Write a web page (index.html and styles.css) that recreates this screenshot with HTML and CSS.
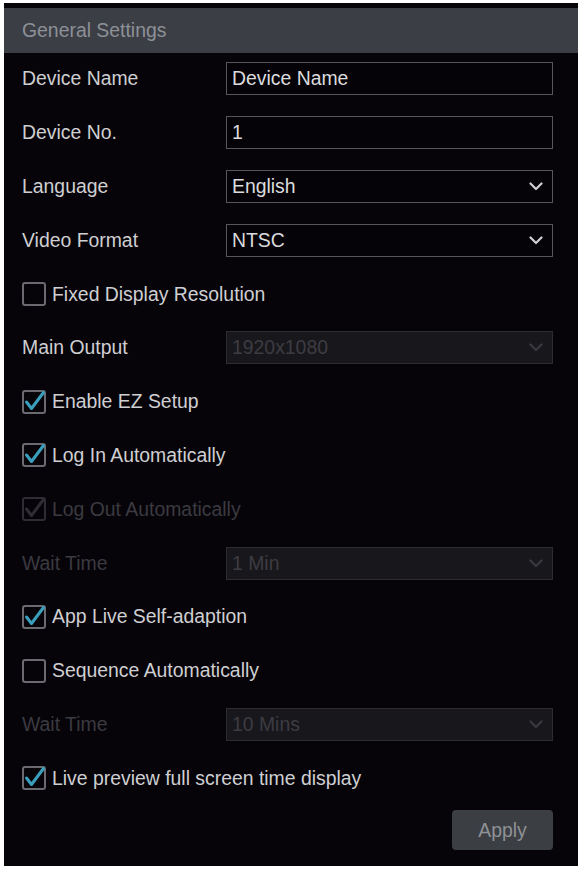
FILE: index.html
```html
<!DOCTYPE html>
<html>
<head>
<meta charset="utf-8">
<link rel="stylesheet" href="styles.css">
</head>
<body>
<div class="panel">
  <div class="header">General Settings</div>
  <div class="form">
    <div class="row"><span class="label">Device Name</span><div class="field">Device Name</div></div>
    <div class="row"><span class="label">Device No.</span><div class="field">1</div></div>
    <div class="row"><span class="label">Language</span><div class="field select">English<svg class="chev" viewBox="0 0 14 9"><polyline points="1.5,1.5 7,7 12.5,1.5"/></svg></div></div>
    <div class="row"><span class="label">Video Format</span><div class="field select">NTSC<svg class="chev" viewBox="0 0 14 9"><polyline points="1.5,1.5 7,7 12.5,1.5"/></svg></div></div>
    <div class="row"><label class="check"><span class="box"></span>Fixed Display Resolution</label></div>
    <div class="row"><span class="label">Main Output</span><div class="field select disabled">1920x1080<svg class="chev" viewBox="0 0 14 9"><polyline points="1.5,1.5 7,7 12.5,1.5"/></svg></div></div>
    <div class="row"><label class="check"><span class="box on"><svg viewBox="0 0 24 24"><polyline points="4.5,12 9.5,18.5 21.5,2.5"/></svg></span>Enable EZ Setup</label></div>
    <div class="row"><label class="check"><span class="box on"><svg viewBox="0 0 24 24"><polyline points="4.5,12 9.5,18.5 21.5,2.5"/></svg></span>Log In Automatically</label></div>
    <div class="row"><label class="check off"><span class="box on"><svg viewBox="0 0 24 24"><polyline points="4.5,12 9.5,18.5 21.5,2.5"/></svg></span>Log Out Automatically</label></div>
    <div class="row"><span class="label off">Wait Time</span><div class="field select disabled">1 Min<svg class="chev" viewBox="0 0 14 9"><polyline points="1.5,1.5 7,7 12.5,1.5"/></svg></div></div>
    <div class="row"><label class="check"><span class="box on"><svg viewBox="0 0 24 24"><polyline points="4.5,12 9.5,18.5 21.5,2.5"/></svg></span>App Live Self-adaption</label></div>
    <div class="row"><label class="check"><span class="box"></span>Sequence Automatically</label></div>
    <div class="row"><span class="label off">Wait Time</span><div class="field select disabled">10 Mins<svg class="chev" viewBox="0 0 14 9"><polyline points="1.5,1.5 7,7 12.5,1.5"/></svg></div></div>
    <div class="row"><label class="check"><span class="box on"><svg viewBox="0 0 24 24"><polyline points="4.5,12 9.5,18.5 21.5,2.5"/></svg></span>Live preview full screen time display</label></div>
    <div class="actions"><button class="apply">Apply</button></div>
  </div>
</div>
</body>
</html>
```
FILE: styles.css
```css
html, body {
  margin: 0;
  padding: 0;
  background: #ffffff;
}

body {
  font-family: "Liberation Sans", Arial, sans-serif;
  font-size: 19.4px;
  color: #cfcfd2;
}

.panel {
  margin: 3px 0 0 4px;
  width: 574px;
  height: 863px;
  box-sizing: border-box;
  padding-top: 5px;
  background: #060409;
}

.header {
  height: 45px;
  background: #3b3e45;
  color: #8d9097;
  line-height: 45px;
  padding-left: 18px;
  font-size: 19.4px;
}

.form {
  padding: 0 25px 0 18px;
  margin-top: -1px;
}

.row {
  height: 53.8px;
  display: grid;
  grid-template-columns: 204px 1fr;
  align-items: center;
}

.label {
  color: #cfcfd2;
}

.label.off {
  color: #3b3a40;
}

.field {
  height: 33px;
  box-sizing: border-box;
  border: 1px solid #56565b;
  background: #050307;
  color: #dcdcdf;
  padding: 0 5px;
  display: flex;
  align-items: center;
  justify-content: space-between;
}

.field.disabled {
  background: #18171c;
  border-color: #2c2b31;
  color: #3d3c42;
}

.chev {
  width: 14px;
  height: 9px;
  margin-right: 4px;
  fill: none;
  stroke: #d0d0d4;
  stroke-width: 2.2;
  stroke-linecap: round;
  stroke-linejoin: round;
}

.field.disabled .chev {
  stroke: #3a3940;
}

.check {
  grid-column: 1 / 3;
  display: flex;
  align-items: center;
  gap: 6px;
  color: #cfcfd2;
}

.check.off {
  color: #3b3a40;
}

.box {
  width: 24px;
  height: 24px;
  box-sizing: border-box;
  border: 2px solid #6a6a70;
  border-radius: 3px;
  position: relative;
  flex: none;
}

.box svg {
  position: absolute;
  left: -2px;
  top: -2px;
  width: 24px;
  height: 24px;
  overflow: visible;
  fill: none;
  stroke: #3a9fbd;
  stroke-width: 3;
  stroke-linecap: round;
  stroke-linejoin: round;
}

.check.off .box {
  border-color: #2e2d33;
}

.check.off .box svg {
  stroke: #2e2d33;
}

.actions {
  display: flex;
  justify-content: flex-end;
  margin-top: 5px;
}

.apply {
  width: 101px;
  height: 40px;
  border: none;
  border-radius: 4px;
  background: #3b3e43;
  color: #8e9195;
  font-family: "Liberation Sans", Arial, sans-serif;
  font-size: 19.4px;
  padding: 0;
}
```
